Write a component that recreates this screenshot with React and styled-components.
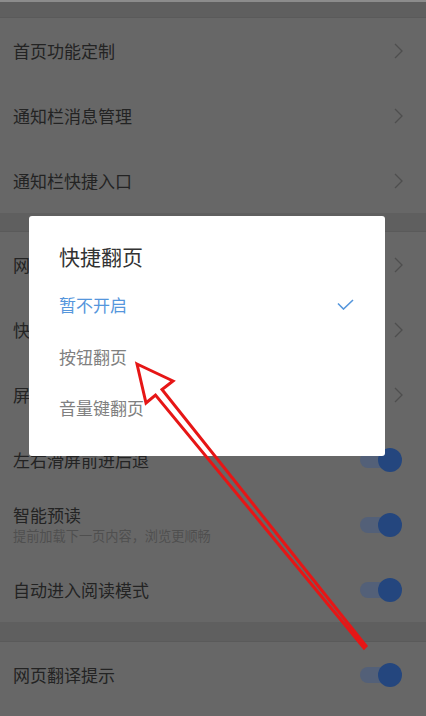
import React from "react";
import styled, { createGlobalStyle } from "styled-components";

const GlobalStyle = createGlobalStyle`
  html, body {
    margin: 0;
    padding: 0;
    background: #676767;
  }
  * {
    box-sizing: border-box;
  }
`;

const Screen = styled.div`
  position: relative;
  width: 426px;
  height: 716px;
  overflow: hidden;
  background: #676767;
  font-family: "Noto Sans CJK SC", "Noto Sans", sans-serif;
  border-top: 2px solid #8c8c8c;
`;

const Gap = styled.div`
  height: ${(p) => p.h}px;
  background: #5f5f5f;
  border-bottom: 1px solid #5a5a5a;
`;

const Row = styled.div`
  height: 65px;
  display: flex;
  align-items: center;
  justify-content: space-between;
  padding: 0 24px 0 13px;
`;

const Texts = styled.div`
  display: flex;
  flex-direction: column;
`;

const Label = styled.div`
  font-size: 17px;
  line-height: 22px;
  color: #232323;
`;

const Sub = styled.div`
  font-size: 13.2px;
  line-height: 18px;
  margin-top: 1px;
  color: #4f4f4f;
`;

const Chevron = styled.svg`
  width: 9px;
  height: 16px;
  margin-right: -1px;
`;

const Toggle = styled.div`
  position: relative;
  width: 42px;
  height: 24px;
  display: flex;
  align-items: center;
  &::before {
    content: "";
    width: 36px;
    height: 16px;
    border-radius: 8px;
    background: #536078;
  }
  &::after {
    content: "";
    position: absolute;
    right: 0;
    top: 0;
    width: 24px;
    height: 24px;
    border-radius: 50%;
    background: #24467e;
  }
`;

const Dialog = styled.div`
  position: absolute;
  left: 29px;
  top: 214px;
  width: 356px;
  height: 240px;
  background: #fff;
  border-radius: 3px;
  padding: 27px 31px 18px 30px;
`;

const Title = styled.div`
  font-size: 21px;
  line-height: 27px;
  color: #333;
  margin-bottom: 9px;
`;

const Option = styled.div`
  height: 51.5px;
  display: flex;
  align-items: center;
  justify-content: space-between;
  font-size: 17px;
  color: ${(p) => (p.active ? "#5596dc" : "#808080")};
`;

const Arrow = styled.svg`
  position: absolute;
  left: 0;
  top: 0;
  width: 426px;
  height: 716px;
  pointer-events: none;
`;

const ChevronIcon = () => (
  <Chevron viewBox="0 0 9 16">
    <polyline points="1,1 8,8 1,15" fill="none" stroke="#4e4e4e" strokeWidth="1.3" />
  </Chevron>
);

const rows = [
  { gap: 16 },
  { label: "首页功能定制", kind: "link" },
  { label: "通知栏消息管理", kind: "link" },
  { label: "通知栏快捷入口", kind: "link" },
  { gap: 19 },
  { label: "网页浏览设置", kind: "link" },
  { label: "快捷翻页", kind: "link" },
  { label: "屏幕旋转", kind: "link" },
  { label: "左右滑屏前进后退", kind: "toggle" },
  { label: "智能预读", sub: "提前加载下一页内容，浏览更顺畅", kind: "toggle" },
  { label: "自动进入阅读模式", kind: "toggle" },
  { gap: 20 },
  { label: "网页翻译提示", kind: "toggle" },
];

const options = ["暂不开启", "按钮翻页", "音量键翻页"];

export default function App() {
  return (
    <>
      <GlobalStyle />
      <Screen>
        {rows.map((r, i) =>
          r.gap ? (
            <Gap key={i} h={r.gap} />
          ) : (
            <Row key={i}>
              <Texts>
                <Label>{r.label}</Label>
                {r.sub && <Sub>{r.sub}</Sub>}
              </Texts>
              {r.kind === "link" ? <ChevronIcon /> : <Toggle />}
            </Row>
          )
        )}

        <Dialog>
          <Title>快捷翻页</Title>
          {options.map((o, i) => (
            <Option key={o} active={i === 0}>
              {o}
              {i === 0 && (
                <svg width="17" height="11" viewBox="0 0 17 11">
                  <polyline
                    points="1,4.5 6.5,10 16,1"
                    fill="none"
                    stroke="#5596dc"
                    strokeWidth="1.6"
                  />
                </svg>
              )}
            </Option>
          ))}
        </Dialog>

        <Arrow viewBox="0 0 426 716">
          <polygon
            points="137,362 173,379 162,387.5 366,644 364,646 155.5,393 146,401"
            fill="none"
            stroke="#e61616"
            strokeWidth="3"
            strokeLinejoin="miter"
          />
        </Arrow>
      </Screen>
    </>
  );
}
